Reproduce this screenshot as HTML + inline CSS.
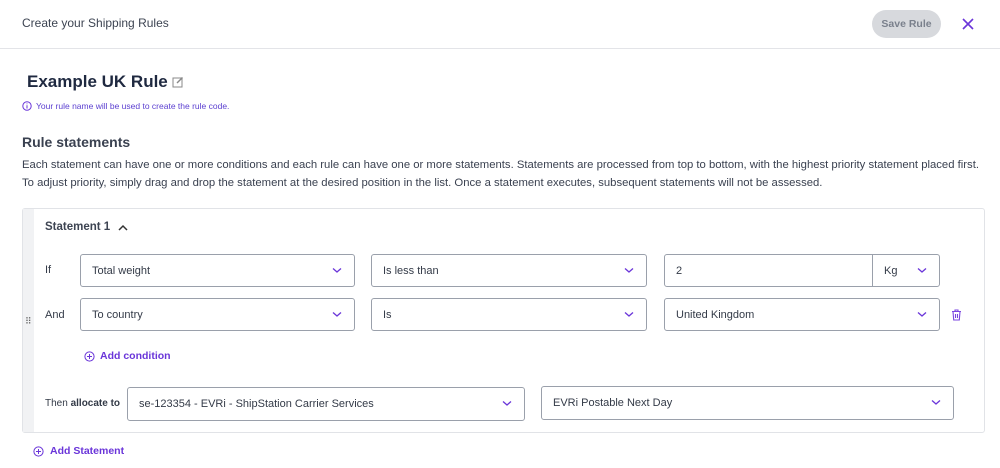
<!DOCTYPE html>
<html><head><style>
*{box-sizing:border-box;margin:0;padding:0}
body{width:1000px;height:468px;overflow:hidden;background:#fff;font-family:"Liberation Sans",sans-serif;color:#333a47;position:relative}
.a{position:absolute}
.sel{position:absolute;border:1px solid #9aa0ab;border-radius:3px;font-size:11px;color:#333a47;padding-left:11px;display:flex;align-items:center;background:#fff}
.chev{position:absolute;right:12px;top:50%;margin-top:-4px}
.purple{color:#6a35d9}
</style></head><body>
<div class="a" style="left:22px;top:16px;font-size:12px;color:#3d4452">Create your Shipping Rules</div>
<div class="a" style="left:872px;top:10px;width:69px;height:28px;border-radius:14px;background:#d7d9dd;color:#7a808c;font-size:10.5px;font-weight:bold;text-align:center;line-height:28px">Save Rule</div>
<svg class="a" style="left:962px;top:18px" width="12" height="12" viewBox="0 0 12 12"><path d="M1 1L11 11M11 1L1 11" stroke="#6a35d9" stroke-width="1.6"/></svg>
<div class="a" style="left:0;top:48px;width:1000px;height:1px;background:#e3e4e8"></div>
<div class="a" style="left:27px;top:72px;font-size:17px;font-weight:bold;color:#1f2940">Example UK Rule</div>
<svg class="a" style="left:172px;top:76px" width="12" height="12" viewBox="0 0 12 12"><rect x="1" y="2" width="9" height="9" fill="none" stroke="#888" stroke-width="1"/><path d="M5 7L10.5 1.5" stroke="#888" stroke-width="1.4"/></svg>
<svg class="a" style="left:22px;top:101px" width="10" height="10" viewBox="0 0 10 10"><circle cx="5" cy="5" r="4.2" fill="none" stroke="#6a35d9"/><path d="M5 4.3V7.5M5 2.5V3.3" stroke="#6a35d9"/></svg>
<div class="a purple" style="left:36px;top:101px;font-size:8.5px;color:#5b3fd0">Your rule name will be used to create the rule code.</div>
<div class="a" style="left:22px;top:134px;font-size:14px;font-weight:bold;color:#3a4150">Rule statements</div>
<div class="a" style="left:22px;top:157px;width:970px;font-size:11.3px;line-height:17.5px;color:#3a4150">Each statement can have one or more conditions and each rule can have one or more statements. Statements are processed from top to bottom, with the highest priority statement placed first. To adjust priority, simply drag and drop the statement at the desired position in the list. Once a statement executes, subsequent statements will not be assessed.</div>
<div class="a" style="left:22px;top:208px;width:963px;height:225px;border:1px solid #e1e3e7;border-radius:3px"></div>
<div class="a" style="left:23px;top:209px;width:11px;height:223px;background:#f1f2f4"></div>
<div class="a" style="left:25px;top:316px;font-size:9px;color:#666;letter-spacing:-1px">⠿</div>
<div class="a" style="left:45px;top:221px;font-size:11.5px;font-weight:bold;color:#3d4452">Statement 1</div>
<svg class="a" style="left:118px;top:224px" width="10" height="8" viewBox="0 0 10 8"><path d="M1 6L5 2L9 6" fill="none" stroke="#333" stroke-width="1.5"/></svg>
<div class="a" style="left:45px;top:264px;font-size:11px">If</div>
<div class="a" style="left:45px;top:309px;font-size:11px">And</div>
<div class="sel" style="left:80px;top:254px;width:275px;height:33px">Total weight<svg class="chev" width="10" height="7" viewBox="0 0 10 7"><path d="M1 1.5L5 5L9 1.5" fill="none" stroke="#6a35d9" stroke-width="1.3"/></svg></div>
<div class="sel" style="left:371px;top:254px;width:276px;height:33px">Is less than<svg class="chev" width="10" height="7" viewBox="0 0 10 7"><path d="M1 1.5L5 5L9 1.5" fill="none" stroke="#6a35d9" stroke-width="1.3"/></svg></div>
<div class="sel" style="left:664px;top:254px;width:209px;height:33px;border-radius:3px 0 0 3px">2</div>
<div class="sel" style="left:872px;top:254px;width:68px;height:33px;border-radius:0 3px 3px 0">Kg<svg class="chev" width="10" height="7" viewBox="0 0 10 7"><path d="M1 1.5L5 5L9 1.5" fill="none" stroke="#6a35d9" stroke-width="1.3"/></svg></div>
<div class="sel" style="left:80px;top:298px;width:275px;height:33px">To country<svg class="chev" width="10" height="7" viewBox="0 0 10 7"><path d="M1 1.5L5 5L9 1.5" fill="none" stroke="#6a35d9" stroke-width="1.3"/></svg></div>
<div class="sel" style="left:371px;top:298px;width:276px;height:33px">Is<svg class="chev" width="10" height="7" viewBox="0 0 10 7"><path d="M1 1.5L5 5L9 1.5" fill="none" stroke="#6a35d9" stroke-width="1.3"/></svg></div>
<div class="sel" style="left:664px;top:298px;width:276px;height:33px">United Kingdom<svg class="chev" width="10" height="7" viewBox="0 0 10 7"><path d="M1 1.5L5 5L9 1.5" fill="none" stroke="#6a35d9" stroke-width="1.3"/></svg></div>
<svg class="a" style="left:951px;top:309px" width="11" height="12" viewBox="0 0 11 12"><path d="M1 2.5H10M4 2.5V1H7V2.5M2 2.5L2.7 11H8.3L9 2.5M4.5 5V9M6.5 5V9" fill="none" stroke="#7b45e0" stroke-width="1.1"/></svg>
<svg class="a" style="left:84px;top:351px" width="11" height="11" viewBox="0 0 11 11"><circle cx="5.5" cy="5.5" r="4.6" fill="none" stroke="#6a35d9"/><path d="M5.5 3V8M3 5.5H8" stroke="#6a35d9"/></svg>
<div class="a purple" style="left:100px;top:350px;font-size:10.5px;font-weight:bold">Add condition</div>
<div class="a" style="left:45px;top:398px;font-size:10px">Then <b>allocate to</b></div>
<div class="sel" style="left:127px;top:387px;width:398px;height:34px">se-123354 - EVRi - ShipStation Carrier Services<svg class="chev" width="10" height="7" viewBox="0 0 10 7"><path d="M1 1.5L5 5L9 1.5" fill="none" stroke="#6a35d9" stroke-width="1.3"/></svg></div>
<div class="sel" style="left:541px;top:386px;width:413px;height:34px">EVRi Postable Next Day<svg class="chev" width="10" height="7" viewBox="0 0 10 7"><path d="M1 1.5L5 5L9 1.5" fill="none" stroke="#6a35d9" stroke-width="1.3"/></svg></div>
<svg class="a" style="left:33px;top:446px" width="11" height="11" viewBox="0 0 11 11"><circle cx="5.5" cy="5.5" r="4.6" fill="none" stroke="#6a35d9"/><path d="M5.5 3V8M3 5.5H8" stroke="#6a35d9"/></svg>
<div class="a purple" style="left:50px;top:445px;font-size:10.5px;font-weight:bold">Add Statement</div>
</body></html>
